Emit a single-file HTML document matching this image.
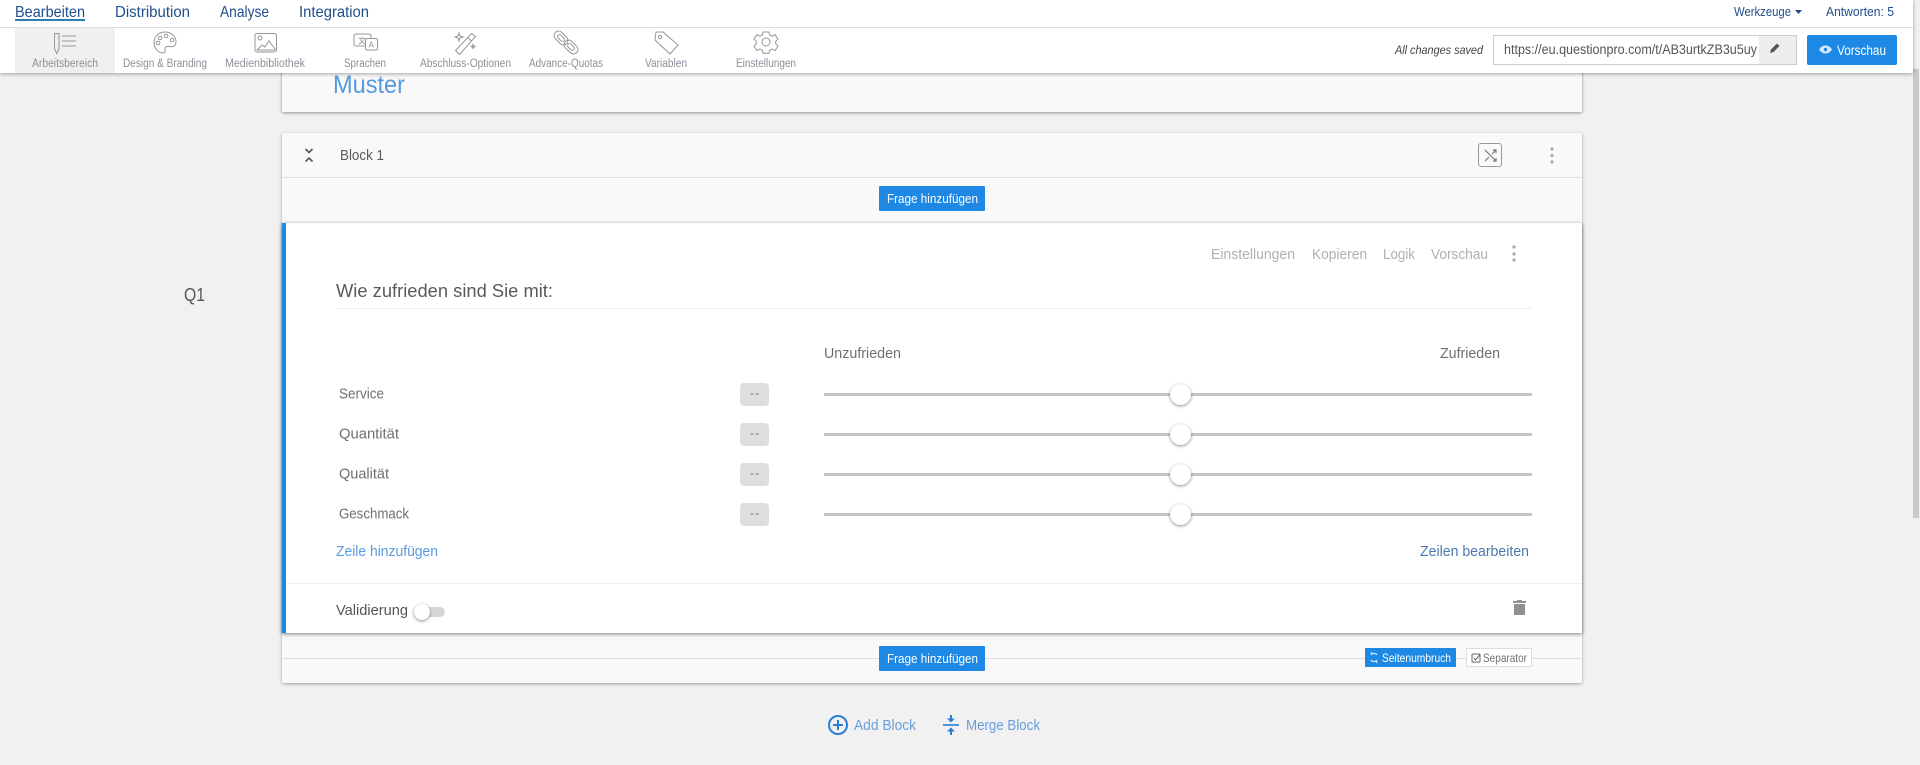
<!DOCTYPE html>
<html lang="de"><head><meta charset="utf-8"><title>Umfrage bearbeiten</title>
<style>
html,body{margin:0;padding:0;width:1920px;height:765px;overflow:hidden;background:#f1f1f1}
*{box-sizing:border-box}
.a{position:absolute}
svg text{font-family:"Liberation Sans","Noto Sans CJK SC",sans-serif}
</style></head><body>
<div class="a" style="left:1913px;top:69px;width:6px;height:449px;background:#cacaca"></div>
<div class="a" style="left:282px;top:60px;width:1300px;height:52px;background:#f9f9f9;box-shadow:0 1px 3px rgba(0,0,0,.4)"></div>
<div class="a" style="left:282px;top:133px;width:1300px;height:550px;background:#f9f9f9;box-shadow:0 1px 3px rgba(0,0,0,.35)"></div>
<div class="a" style="left:282px;top:177px;width:1300px;height:1px;background:#e0e0e0"></div>
<div class="a" style="left:282px;top:658px;width:1300px;height:1px;background:#dcdcdc"></div>
<div class="a" style="left:282px;top:223px;width:1300px;height:410px;background:#fff;border-left:4px solid #1e88e5;box-shadow:0 1px 4px rgba(0,0,0,.5)"></div>
<div class="a" style="left:336px;top:308px;width:1196px;height:1px;background:#eee"></div>
<div class="a" style="left:286px;top:583px;width:1296px;height:1px;background:#eee"></div>
<div class="a" style="left:879px;top:186px;width:106px;height:25px;background:#1e88e5;border-radius:1px"></div>
<div class="a" style="left:879px;top:646px;width:106px;height:25px;background:#1e88e5;border-radius:1px"></div>
<div class="a" style="left:1365px;top:648px;width:91px;height:19px;background:#1e88e5"></div>
<div class="a" style="left:1466px;top:648px;width:66px;height:19px;background:#fff;border:1px solid #ddd"></div>
<div class="a" style="left:1478px;top:143px;width:24px;height:24px;border:1px solid #999;border-radius:3px"></div>

<div class="a" style="left:740px;top:383px;width:29px;height:23px;background:#dedede;border-radius:4px"></div>
<div class="a" style="left:740px;top:423px;width:29px;height:23px;background:#dedede;border-radius:4px"></div>
<div class="a" style="left:740px;top:463px;width:29px;height:23px;background:#dedede;border-radius:4px"></div>
<div class="a" style="left:740px;top:503px;width:29px;height:23px;background:#dedede;border-radius:4px"></div>
<div class="a" style="left:824px;top:393px;width:708px;height:3px;background:#c4c4c4"></div>
<div class="a" style="left:824px;top:433px;width:708px;height:3px;background:#c4c4c4"></div>
<div class="a" style="left:824px;top:473px;width:708px;height:3px;background:#c4c4c4"></div>
<div class="a" style="left:824px;top:513px;width:708px;height:3px;background:#c4c4c4"></div>
<div class="a" style="left:1170px;top:384px;width:21px;height:21px;border-radius:50%;background:#fff;box-shadow:0 1px 3px rgba(0,0,0,.45)"></div>
<div class="a" style="left:1170px;top:424px;width:21px;height:21px;border-radius:50%;background:#fff;box-shadow:0 1px 3px rgba(0,0,0,.45)"></div>
<div class="a" style="left:1170px;top:464px;width:21px;height:21px;border-radius:50%;background:#fff;box-shadow:0 1px 3px rgba(0,0,0,.45)"></div>
<div class="a" style="left:1170px;top:504px;width:21px;height:21px;border-radius:50%;background:#fff;box-shadow:0 1px 3px rgba(0,0,0,.45)"></div>
<div class="a" style="left:420px;top:607px;width:25px;height:10px;border-radius:5px;background:#d6d6d6"></div>
<div class="a" style="left:414px;top:604px;width:16px;height:16px;border-radius:50%;background:#fff;box-shadow:0 1px 3px rgba(0,0,0,.45)"></div>

<div class="a" style="left:0;top:0;width:1913px;height:73px;background:#fff;box-shadow:0 1px 4px rgba(0,0,0,.35)"></div>
<div class="a" style="left:0;top:27px;width:1913px;height:1px;background:#ddd"></div>
<div class="a" style="left:15px;top:28px;width:100px;height:45px;background:#f0f0f0"></div>
<div class="a" style="left:15px;top:19px;width:70px;height:2px;background:#2a7fb0"></div>
<div class="a" style="left:1493px;top:35px;width:304px;height:30px;background:#fff;border:1px solid #ccc"></div>
<div class="a" style="left:1759px;top:36px;width:37px;height:28px;background:#eee"></div>
<div class="a" style="left:1807px;top:35px;width:90px;height:30px;background:#1e88e5;border-radius:2px"></div>

<svg class="a" style="left:0;top:0" width="1920" height="765" viewBox="0 0 1920 765">
<g font-size="16" fill="#1f4e8c">
<text x="15" y="17" textLength="70" lengthAdjust="spacingAndGlyphs">Bearbeiten</text>
<text x="115" y="17" textLength="75" lengthAdjust="spacingAndGlyphs">Distribution</text>
<text x="220" y="17" textLength="49" lengthAdjust="spacingAndGlyphs">Analyse</text>
<text x="299" y="17" textLength="70" lengthAdjust="spacingAndGlyphs">Integration</text>
</g>
<g font-size="13" fill="#1f4e8c">
<text x="1734" y="16" textLength="57" lengthAdjust="spacingAndGlyphs">Werkzeuge</text>
<text x="1826" y="16" textLength="68" lengthAdjust="spacingAndGlyphs">Antworten: 5</text>
</g>
<path d="M1795 10h7l-3.500 4z" fill="#1f4e8c"/>
<g font-size="11.500" fill="#8b9099">
<text x="32" y="67" textLength="66" lengthAdjust="spacingAndGlyphs">Arbeitsbereich</text>
<text x="123" y="67" textLength="84" lengthAdjust="spacingAndGlyphs">Design &amp; Branding</text>
<text x="225" y="67" textLength="80" lengthAdjust="spacingAndGlyphs">Medienbibliothek</text>
<text x="344" y="67" textLength="42" lengthAdjust="spacingAndGlyphs">Sprachen</text>
<text x="420" y="67" textLength="91" lengthAdjust="spacingAndGlyphs">Abschluss-Optionen</text>
<text x="529" y="67" textLength="74" lengthAdjust="spacingAndGlyphs">Advance-Quotas</text>
<text x="645" y="67" textLength="42" lengthAdjust="spacingAndGlyphs">Variablen</text>
<text x="736" y="67" textLength="60" lengthAdjust="spacingAndGlyphs">Einstellungen</text>
</g>
<g fill="none" stroke="#969696" stroke-width="1">
<!-- Arbeitsbereich -->
<path d="M54.500 33.500h4.500v15l-2.250 5-2.250-5z"/><path d="M62 36h14M62 41h14M62 46h14" stroke-width="1.300" stroke="#aaa"/>
<!-- Palette -->
<path d="M165 32c-7 0-11 5-11 10.500s4 10.500 9 10.500c3 0 2-2 2-4s2-3 4-2.500 7 1 7-5c0-5-5-9.500-11-9.500z"/>
<circle cx="160" cy="38" r="1.800"/><circle cx="166" cy="36" r="1.800"/><circle cx="172" cy="40" r="1.800"/><circle cx="158" cy="43" r="1.800"/>
<!-- Image -->
<rect x="255" y="33.500" width="21.500" height="18.500" rx="2"/><circle cx="260" cy="38" r="2"/><path d="M257 50l5-5 3 2 4-6 6 8v1z"/>
<!-- Sprachen -->
<path d="M366 46h-10a2 2 0 0 1-2-2v-8a2 2 0 0 1 2-2h13a2 2 0 0 1 2 2v2.500"/><rect x="365.500" y="38.500" width="12" height="11.500" rx="1.500"/>
<!-- Wand -->
<path d="M455.500 50.500l16-17 4 3-16 18z"/><path d="M467.500 37.500l4 3.500"/><path d="M459 33l1 3 3 1-3 1-1 3-1-3-3-1 3-1zM473 44l.5 2 2 .5-2 .5-.5 2-.5-2-2-.5 2-.5z"/>
<!-- Chain -->
<rect x="553" y="33.500" width="16" height="9" rx="4.500" transform="rotate(45 561 38)"/>
<rect x="563" y="42.500" width="16" height="9" rx="4.500" transform="rotate(45 571 47)"/>
<rect x="557" y="36" width="8" height="4" rx="2" transform="rotate(45 561 38)"/>
<rect x="567" y="45" width="8" height="4" rx="2" transform="rotate(45 571 47)"/>
<!-- Tag -->
<path d="M656 32h7l15 13-8 9-15-14z"/><circle cx="660" cy="37" r="1.600"/>
<!-- Gear -->
<circle cx="766" cy="42" r="4"/><path d="M763 32h6l.6 3 2.600 1.200 2.800-1.600 3 4.500-2.300 2.200v2.600l2.300 2.200-3 4.500-2.800-1.600-2.600 1.200-.6 3h-6l-.6-3-2.600-1.200-2.800 1.600-3-4.500 2.300-2.200v-2.600l-2.300-2.200 3-4.500 2.800 1.600 2.600-1.200z"/>
</g>
<text x="358" y="43.500" font-size="8" fill="#8a8a8a">文</text>
<text x="368.500" y="47.500" font-size="8" fill="#8a8a8a">A</text>
<text x="333" y="93" font-size="25" fill="#559ae0" textLength="72" lengthAdjust="spacingAndGlyphs">Muster</text>
<text x="1395" y="54" font-size="11.500" font-style="italic" fill="#444" textLength="88" lengthAdjust="spacingAndGlyphs">All changes saved</text>
<text x="1504" y="54" font-size="13.500" fill="#555" textLength="253" lengthAdjust="spacingAndGlyphs">https://eu.questionpro.com/t/AB3urtkZB3u5uy</text>
<path d="M1770 53l1-3.500 6-6 2.500 2.500-6 6z" fill="#555"/>
<path d="M1819 49.500c2-3 4-4 6.500-4s4.500 1 6.500 4c-2 3-4 4-6.500 4s-4.500-1-6.500-4z" fill="#d5e8fa"/><circle cx="1825.500" cy="49.500" r="1.700" fill="#1e88e5"/>
<text x="1837" y="55" font-size="13.500" fill="#fff" textLength="49" lengthAdjust="spacingAndGlyphs">Vorschau</text>

<path d="M305.500 149l3.500 3.500 3.500-3.500M305.500 161.500l3.500-3.500 3.500 3.500" fill="none" stroke="#555" stroke-width="1.600"/>
<text x="340" y="160" font-size="14.500" fill="#5a5a5a" textLength="44" lengthAdjust="spacingAndGlyphs">Block 1</text>
<path d="M1485 150l11 11M1485 161l4-4M1492 154l4-4M1493 150h3v3M1493 161h3v-3" fill="none" stroke="#777" stroke-width="1.200"/>
<g fill="#aaa"><circle cx="1552" cy="149" r="1.600"/><circle cx="1552" cy="155.500" r="1.600"/><circle cx="1552" cy="162" r="1.600"/>
<circle cx="1514" cy="247" r="1.600"/><circle cx="1514" cy="254" r="1.600"/><circle cx="1514" cy="260" r="1.600"/></g>
<g font-size="13" fill="#fff">
<text x="887" y="203" textLength="91" lengthAdjust="spacingAndGlyphs">Frage hinzufügen</text>
<text x="887" y="663" textLength="91" lengthAdjust="spacingAndGlyphs">Frage hinzufügen</text></g>
<text x="184" y="301" font-size="18" fill="#555" textLength="21" lengthAdjust="spacingAndGlyphs">Q1</text>
<g font-size="14.500" fill="#b0b0b0">
<text x="1211" y="259" textLength="84" lengthAdjust="spacingAndGlyphs">Einstellungen</text>
<text x="1312" y="259" textLength="55" lengthAdjust="spacingAndGlyphs">Kopieren</text>
<text x="1383" y="259" textLength="32" lengthAdjust="spacingAndGlyphs">Logik</text>
<text x="1431" y="259" textLength="57" lengthAdjust="spacingAndGlyphs">Vorschau</text></g>
<text x="336" y="297" font-size="18.500" fill="#5a5a5a" textLength="217" lengthAdjust="spacingAndGlyphs">Wie zufrieden sind Sie mit:</text>
<g font-size="14.500" fill="#707070">
<text x="824" y="358" textLength="77" lengthAdjust="spacingAndGlyphs">Unzufrieden</text>
<text x="1440" y="358" textLength="60" lengthAdjust="spacingAndGlyphs">Zufrieden</text>
<text x="339" y="398.500" textLength="45" lengthAdjust="spacingAndGlyphs">Service</text>
<text x="339" y="438.500" textLength="60" lengthAdjust="spacingAndGlyphs">Quantität</text>
<text x="339" y="478.500" textLength="50" lengthAdjust="spacingAndGlyphs">Qualität</text>
<text x="339" y="518.500" textLength="70" lengthAdjust="spacingAndGlyphs">Geschmack</text></g>
<g font-size="12" fill="#777">
<text x="750" y="397" textLength="9" lengthAdjust="spacing">--</text><text x="750" y="437" textLength="9" lengthAdjust="spacing">--</text><text x="750" y="477" textLength="9" lengthAdjust="spacing">--</text><text x="750" y="517" textLength="9" lengthAdjust="spacing">--</text></g>
<text x="336" y="556" font-size="14.500" fill="#5a9ade" textLength="102" lengthAdjust="spacingAndGlyphs">Zeile hinzufügen</text>
<text x="1420" y="556" font-size="14.500" fill="#4a78ad" textLength="109" lengthAdjust="spacingAndGlyphs">Zeilen bearbeiten</text>
<text x="336" y="615" font-size="14.500" fill="#555" textLength="72" lengthAdjust="spacingAndGlyphs">Validierung</text>
<path d="M1514 604h11v11h-11zM1513 601h13v2h-13zM1517 600h5v1h-5z" fill="#909090"/>
<path d="M1371 655c1-2 5-2 6 0M1377 660c-1 2-5 2-6 0M1371 652l1 2M1377 663l-1-2" fill="none" stroke="#cfe5fa" stroke-width="1.300"/>
<text x="1382" y="662" font-size="12" fill="#fff" textLength="69" lengthAdjust="spacingAndGlyphs">Seitenumbruch</text>
<rect x="1472" y="654" width="8" height="8" rx="1" fill="none" stroke="#666"/><path d="M1474 658l1.500 2 4.500-5.500" fill="none" stroke="#666"/>
<text x="1483" y="662" font-size="12" fill="#707070" textLength="44" lengthAdjust="spacingAndGlyphs">Separator</text>

<circle cx="838" cy="725" r="9" fill="none" stroke="#2a7fd4" stroke-width="2"/><path d="M838 720v10M833 725h10" stroke="#2a7fd4" stroke-width="2"/>
<text x="854" y="730" font-size="14.500" fill="#6a9edb" textLength="62" lengthAdjust="spacingAndGlyphs">Add Block</text>
<path d="M943 725h16" stroke="#2a7fd4" stroke-width="1.600"/><path d="M951 715v5M951 730v5" stroke="#2a7fd4" stroke-width="2"/><path d="M947 718.500h8l-4 4zM947 731.500h8l-4-4z" fill="#2a7fd4"/>
<text x="966" y="730" font-size="14.500" fill="#6a9edb" textLength="74" lengthAdjust="spacingAndGlyphs">Merge Block</text>
</svg>
</body></html>
